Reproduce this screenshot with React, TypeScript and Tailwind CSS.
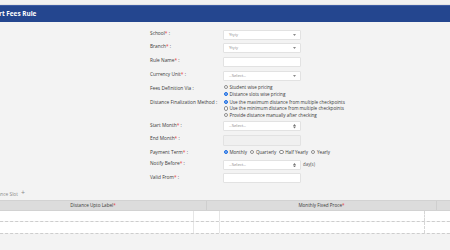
import React from "react";

const F = { fontFamily: '"Open Sans", "Liberation Sans", sans-serif' };

function Req() {
  return <span className="text-[#e53935]">*</span>;
}

function Label({ children }: { children: React.ReactNode }) {
  return (
    <div className="w-[73px] shrink-0 text-[4.8px] leading-[6px] text-[#3a3a3a] whitespace-nowrap">
      {children}
    </div>
  );
}

function Caret() {
  return (
    <svg width="3" height="2" viewBox="0 0 3 2" className="shrink-0">
      <path d="M0 0 L3 0 L1.5 2 Z" fill="#8a8a8a" />
    </svg>
  );
}

function UpDown() {
  return (
    <svg width="3" height="4.5" viewBox="0 0 3 4.5" className="shrink-0">
      <path d="M0 1.9 L3 1.9 L1.5 0 Z" fill="#777" />
      <path d="M0 2.6 L3 2.6 L1.5 4.5 Z" fill="#777" />
    </svg>
  );
}

function Box({
  text,
  icon,
  disabled,
}: {
  text?: string;
  icon?: "caret" | "updown";
  disabled?: boolean;
}) {
  return (
    <div
      className={`w-[78px] h-[10px] border border-[#e2e2e2] rounded-[1px] flex items-center justify-between pl-[5px] pr-[4px] ${
        disabled ? "bg-[#f0f0f0]" : "bg-white"
      }`}
    >
      <span className="text-[4.2px] text-[#8a8a8a] leading-none">{text}</span>
      {icon === "caret" && <Caret />}
      {icon === "updown" && <UpDown />}
    </div>
  );
}

function Radio({ checked, label }: { checked?: boolean; label: string }) {
  return (
    <div className="flex items-center gap-[1.5px] h-[6.6px] whitespace-nowrap">
      {checked ? (
        <span className="w-[4.4px] h-[4.4px] rounded-full bg-[#1f6fe3] border border-[#1f6fe3] flex items-center justify-center">
          <span className="w-[1.8px] h-[1.8px] rounded-full bg-white/40" />
        </span>
      ) : (
        <span className="w-[4.4px] h-[4.4px] rounded-full bg-white border-[0.7px] border-[#8d8d8d]" />
      )}
      <span className="text-[4.6px] leading-none text-[#3a3a3a]">{label}</span>
    </div>
  );
}

export default function App() {
  return (
    <div
      className="w-[450px] h-[250px] bg-[#f3f3f3] overflow-hidden relative"
      style={F}
    >
      <div className="h-[5px] bg-[#f1f1f1] border-b border-[#e4e4e4]" />
      <div className="h-[17px] bg-[#24468f] border-t border-[#3d5ca3] flex items-center">
        <span className="text-white font-bold text-[6.4px] leading-none -ml-[1px]">
          rt Fees Rule
        </span>
      </div>

      <div className="ml-[150px] flex flex-col">
        <div className="flex items-start mt-[8px] h-[10px]">
          <Label>
            School<Req /> :
          </Label>
          <Box text="Ytyiy" icon="caret" />
        </div>
        <div className="flex items-start mt-[3px] h-[10px]">
          <Label>
            Branch<Req /> :
          </Label>
          <Box text="Ytyiy" icon="caret" />
        </div>
        <div className="flex items-start mt-[4px] h-[10px]">
          <Label>
            Rule Name<Req /> :
          </Label>
          <Box />
        </div>
        <div className="flex items-start mt-[4px] h-[10px]">
          <Label>
            Currency Unit<Req /> :
          </Label>
          <Box text="--Select--" icon="caret" />
        </div>
        <div className="flex items-start mt-[3px]">
          <div className="pt-[1px]">
            <Label>Fees Definition Via :</Label>
          </div>
          <div className="flex flex-col ml-[0.5px]">
            <Radio label="Student wise pricing" />
            <Radio checked label="Distance slots wise pricing" />
          </div>
        </div>
        <div className="flex items-start mt-[1.4px]">
          <div className="pt-[0.5px]">
            <Label>Distance Finalization Method :</Label>
          </div>
          <div className="flex flex-col ml-[0.5px]">
            <Radio checked label="Use the maximum distance from multiple checkpoints" />
            <Radio label="Use the minimum distance from multiple checkpoints" />
            <Radio label="Provide distance manually after checking" />
          </div>
        </div>
        <div className="flex items-start mt-[3px] h-[9.5px]">
          <div className="pt-[0.5px]">
            <Label>
              Start Month<Req /> :
            </Label>
          </div>
          <div className="h-[9.5px]">
            <Box text="--Select--" icon="updown" />
          </div>
        </div>
        <div className="flex items-start mt-[4px] h-[11px]">
          <div className="pt-[0.5px]">
            <Label>
              End Month<Req /> :
            </Label>
          </div>
          <div className="w-[78px] h-[11px] border border-[#e2e2e2] bg-[#f0f0f0] rounded-[1px]" />
        </div>
        <div className="flex items-center mt-[3px] h-[6.6px]">
          <Label>
            Payment Term<Req /> :
          </Label>
          <div className="flex items-center gap-[3px] ml-[0.5px]">
            <Radio checked label="Monthly" />
            <Radio label="Quarterly" />
            <Radio label="Half Yearly" />
            <Radio label="Yearly" />
          </div>
        </div>
        <div className="flex items-start mt-[4.5px] h-[9.5px]">
          <div className="pt-[0.5px]">
            <Label>
              Notify Before<Req /> :
            </Label>
          </div>
          <div className="h-[9.5px]">
            <Box text="--Select--" icon="updown" />
          </div>
          <span className="ml-[2px] text-[4.4px] leading-[9.5px] text-[#555]">day(s)</span>
        </div>
        <div className="flex items-start mt-[4px] h-[10px]">
          <div className="pt-[0.5px]">
            <Label>
              Valid From<Req /> :
            </Label>
          </div>
          <Box />
        </div>
      </div>

      <div className="-ml-[20px] mt-[8px]">
        <div className="flex items-center h-[5px] pl-[9px] gap-[3px]">
          <span className="text-[4.8px] leading-none text-[#8a8a8a]">Distance Slot</span>
          <span className="text-[7px] leading-none text-[#8a8a8a] -mt-[2px]">+</span>
        </div>
        <div className="mt-[3.5px] flex h-[11px] bg-[#dcdcdc] border-y border-[#d2d2d2] w-[500px]">
          <div className="w-[227px] border-r border-[#cfcfcf] flex items-center justify-center text-[4.6px] text-[#3a3a3a]">
            Distance Upto Label<Req />
          </div>
          <div className="w-[230px] border-r border-[#cfcfcf] flex items-center justify-center text-[4.6px] text-[#3a3a3a]">
            Monthly Fixed Proce<Req />
          </div>
          <div className="flex-1" />
        </div>
        {[0, 1].map((i) => (
          <div
            key={i}
            className="flex h-[11.5px] border-b border-dashed border-[#cdcdcd] w-[500px]"
          >
            <div className="w-[214px] bg-white border-r border-[#e6e6e6]" />
            <div className="w-[26px] bg-white border-r border-[#e6e6e6]" />
            <div className="w-[205px] bg-white border-r border-dashed border-[#d6d6d6]" />
            <div className="flex-1 bg-white" />
          </div>
        ))}
      </div>
    </div>
  );
}
